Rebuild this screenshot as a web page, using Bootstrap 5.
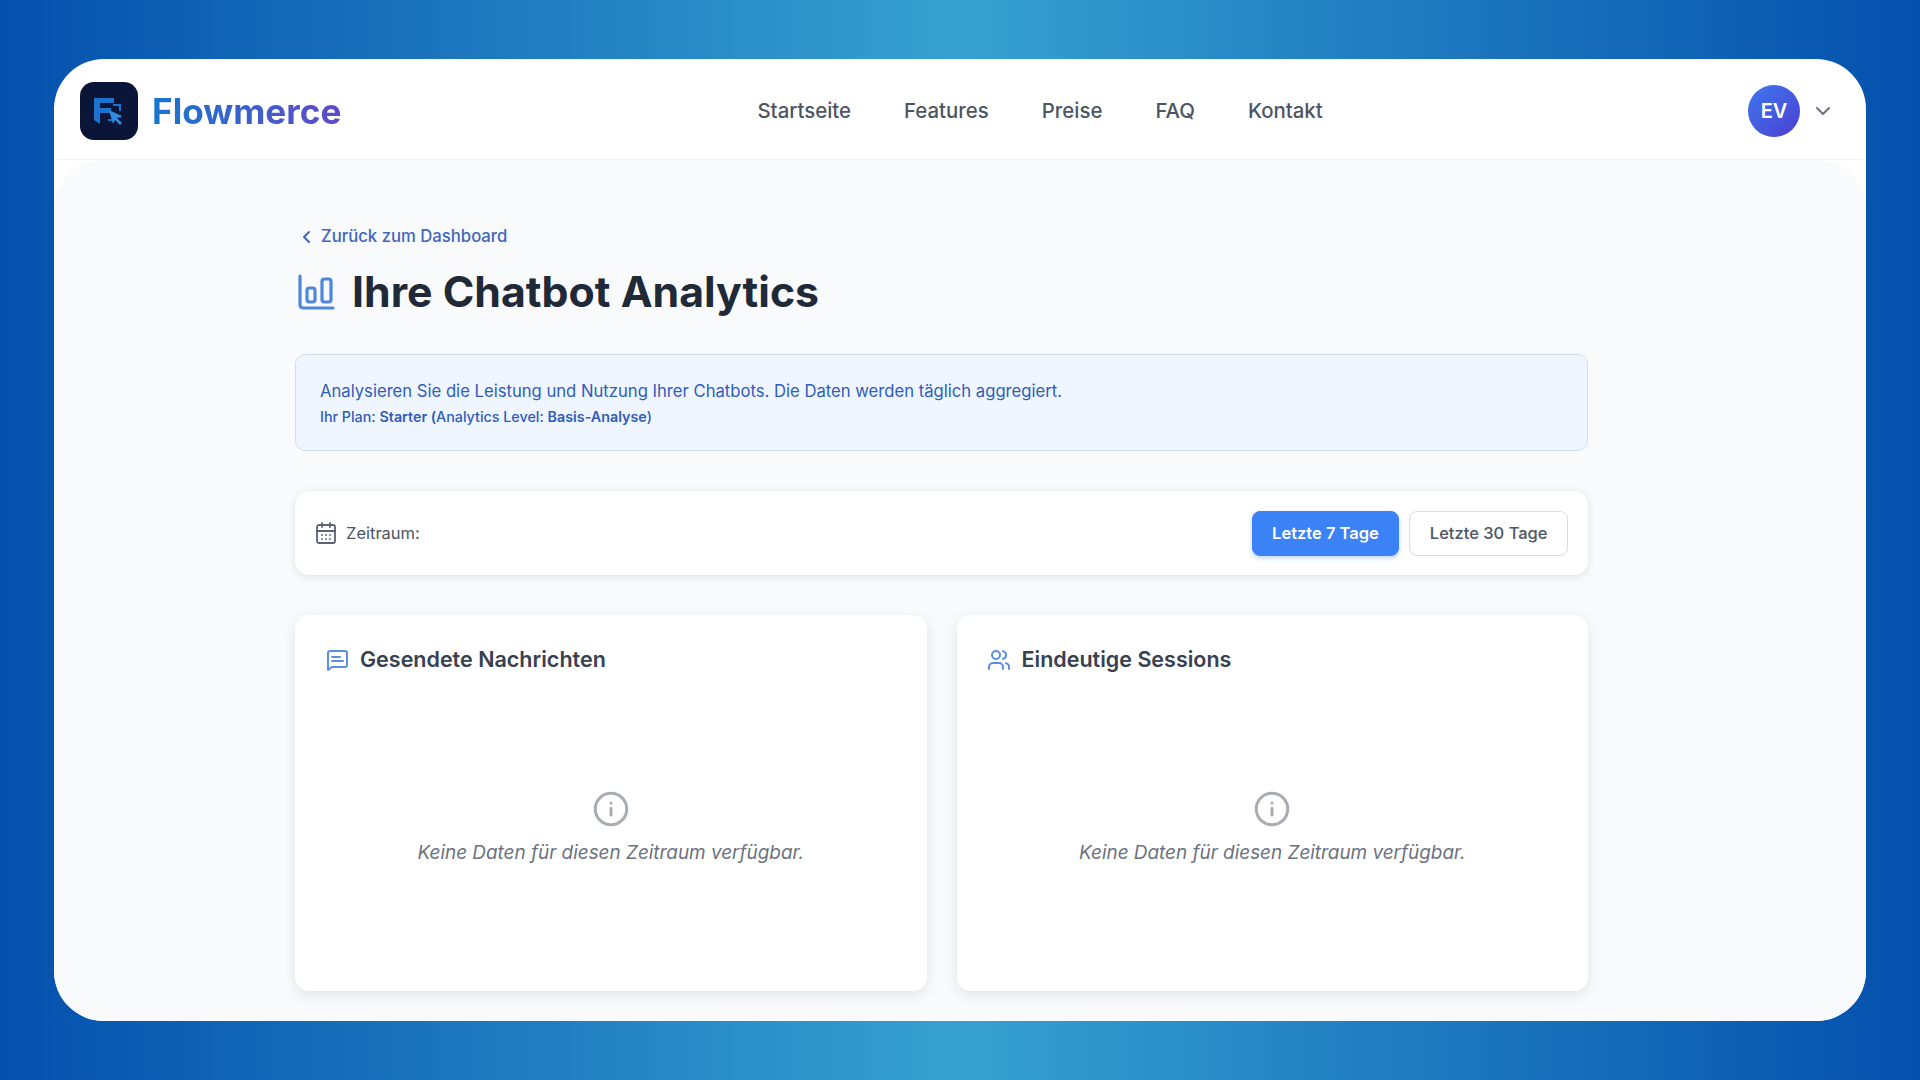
<!DOCTYPE html>
<html lang="de">
<head>
  <meta charset="UTF-8" />
  <meta name="viewport" content="width=device-width, initial-scale=1.0"/>
  <title>Flowmerce Analytics</title>
  <link href="https://cdn.jsdelivr.net/npm/bootstrap@5.3.2/dist/css/bootstrap.min.css" rel="stylesheet" />
  <style>
    html, body { height: 100%; }
    body {
      background: linear-gradient(90deg, #0450ad 0%, #36a1d0 50%, #0450ad 100%);
      font-family: Inter, "Liberation Sans", sans-serif;
      padding: 59px 54px;
      overflow: hidden;
    }
    .app-window { height: 962px; background: #fff; border-radius: 50px; overflow: hidden; }
    .top-bar { height: 101px; padding: 4px 31px 0 26px; border-bottom: 1px solid #f1f3f6; flex: none; }
    .logo-tile { width: 58px; height: 58px; border-radius: 14px; background: #0a1537; }
    .brand-name {
      font-size: 35.2px; font-weight: 700; padding-top: 1px;
      background: linear-gradient(90deg, #1677cf, #6049c9);
      -webkit-background-clip: text; background-clip: text; color: transparent;
    }
    .brand-wrap { gap: 14px; }
    .main-links { gap: 53px; margin-left: 416px; }
    .main-links a { font-size: 20.4px; font-weight: 500; color: #4b5563; text-decoration: none; }
    .avatar-dot {
      width: 52px; height: 52px; border-radius: 50%; color: #fff; font-weight: 600; font-size: 20px;
      background: linear-gradient(135deg, #3f78ef, #4a3fd0);
    }
    .user-wrap { gap: 11px; }
    .page-area { background: #f8fafc; border-radius: 50px 50px 0 0; padding: 64px 278px 0 241px; }
    .back-link { font-size: 16.7px; font-weight: 500; color: #3f66bd; text-decoration: none; gap: 9px; margin-left: 5px; }
    .page-title { font-size: 42.8px; font-weight: 700; color: #1f2937; margin: 0; line-height: 1; }
    .title-row { margin: 17px 0 0 3px; gap: 17px; height: 50px; }
    .info-box {
      margin-top: 36.5px; height: 97px; padding: 23.5px 24px; background: #eff6ff; color: #2f5dbb;
      border: 1px solid #cfdff3; border-radius: 10px; font-size: 16.65px;
    }
    .info-box .plan-line { font-size: 14.3px; font-weight: 500; margin-top: 2px; }
    .info-box strong { font-weight: 600; }
    .range-box {
      margin-top: 40px; height: 84px; padding: 0 20px 0 19px; background: #fff; border-radius: 14px;
      box-shadow: 0 2px 8px rgba(0,0,0,.1);
    }
    .range-label { font-size: 16.5px; color: #4b5563; gap: 8px; }
    .range-btn { height: 45px; padding: 0 19.5px; font-size: 16.5px; font-weight: 500; border-radius: 8px; }
    .range-btn.is-on { background: #3b82f6; color: #fff; border: 1px solid #3b82f6; font-weight: 600; box-shadow: 0 2px 5px rgba(59,130,246,.35); }
    .range-btn.is-off { background: #fff; color: #4b5563; border: 1px solid #d9dde3; }
    .range-btns { gap: 10px; }
    .stat-grid { margin-top: 40px; gap: 30px; }
    .stat-box {
      flex: 1 1 0; height: 376px; padding: 29px 30px; background: #fff; border-radius: 14px;
      box-shadow: 0 4px 14px rgba(0,0,0,.09);
    }
    .stat-head { font-size: 21.5px; font-weight: 600; color: #374151; gap: 11px; margin: 0; height: 32px; }
    .no-data { margin-top: 115px; color: #6b7280; font-style: italic; font-size: 18.9px; gap: 12px; }
  </style>
</head>
<body>
  <div class="app-window d-flex flex-column">
    <header class="top-bar d-flex align-items-center">
      <div class="brand-wrap d-flex align-items-center">
        <div class="logo-tile d-flex align-items-center justify-content-center">
          <svg width="32" height="30" viewBox="0 0 32 30">
            <path d="M1 2h20v5H7v5h11v5H7v11l-6-4z" fill="#1b73cf"/>
            <path d="M20 9h7v6M15 24h4M27 19v3" fill="none" stroke="#1b73cf" stroke-width="2"/>
            <path d="M16 14l13 6-5 2 5 5-2 2-5-5-2 4z" fill="#2f8be0"/>
          </svg>
        </div>
        <span class="brand-name">Flowmerce</span>
      </div>
      <nav class="main-links d-flex">
        <a href="#">Startseite</a>
        <a href="#">Features</a>
        <a href="#">Preise</a>
        <a href="#">FAQ</a>
        <a href="#">Kontakt</a>
      </nav>
      <div class="user-wrap ms-auto d-flex align-items-center">
        <div class="avatar-dot d-flex align-items-center justify-content-center">EV</div>
        <svg width="24" height="24" viewBox="0 0 24 24" fill="none" stroke="#6b7280" stroke-width="2" stroke-linecap="round" stroke-linejoin="round"><path d="m6 9 6 6 6-6"/></svg>
      </div>
    </header>

    <main class="page-area flex-grow-1">
      <a href="#" class="back-link d-inline-flex align-items-center">
        <svg width="12" height="16" viewBox="0 0 12 16" fill="none" stroke="#3f66bd" stroke-width="2" stroke-linecap="round" stroke-linejoin="round"><path d="M9 3 4 8l5 5"/></svg>
        Zurück zum Dashboard
      </a>

      <div class="title-row d-flex align-items-center">
        <svg width="37" height="37" viewBox="0 0 37 37" fill="none" stroke="#4d87dc" stroke-width="3.2" stroke-linecap="round" stroke-linejoin="round">
          <path d="M2 2v29a3 3 0 0 0 3 3h30"/>
          <rect x="9" y="14" width="8" height="14" rx="2.5"/>
          <rect x="24" y="5" width="9" height="23" rx="2.5"/>
        </svg>
        <h1 class="page-title">Ihre Chatbot Analytics</h1>
      </div>

      <div class="info-box">
        <div>Analysieren Sie die Leistung und Nutzung Ihrer Chatbots. Die Daten werden täglich aggregiert.</div>
        <div class="plan-line">Ihr Plan: <strong>Starter (</strong>Analytics Level: <strong>Basis-Analyse</strong>)</div>
      </div>

      <div class="range-box d-flex align-items-center justify-content-between">
        <div class="range-label d-flex align-items-center">
          <svg width="24" height="24" viewBox="0 0 24 24" fill="none" stroke="#5b6472" stroke-width="1.8" stroke-linecap="round" stroke-linejoin="round">
            <rect x="3" y="4" width="18" height="18" rx="2"/>
            <path d="M8 2v4M16 2v4M3 10h18M8 14h.01M12 14h.01M16 14h.01M8 18h.01M12 18h.01M16 18h.01"/>
          </svg>
          <span>Zeitraum:</span>
        </div>
        <div class="range-btns d-flex">
          <button type="button" class="btn range-btn is-on">Letzte 7 Tage</button>
          <button type="button" class="btn range-btn is-off">Letzte 30 Tage</button>
        </div>
      </div>

      <div class="stat-grid d-flex">
        <section class="stat-box">
          <h2 class="stat-head d-flex align-items-center">
            <svg width="24" height="24" viewBox="0 0 24 24" fill="none" stroke="#5a90de" stroke-width="2" stroke-linecap="round" stroke-linejoin="round">
              <path d="M22 17a2 2 0 0 1-2 2H7l-4 3V5a2 2 0 0 1 2-2h15a2 2 0 0 1 2 2z"/>
              <path d="M7 9h8M7 13h11"/>
            </svg>
            Gesendete Nachrichten
          </h2>
          <div class="no-data d-flex flex-column align-items-center">
            <svg width="36" height="36" viewBox="0 0 24 24" fill="none" stroke="#a9adb3" stroke-width="2" stroke-linecap="round" stroke-linejoin="round">
              <circle cx="12" cy="12" r="10.5"/>
              <path d="M12 16v-4.5M12 8h.01"/>
            </svg>
            <span>Keine Daten für diesen Zeitraum verfügbar.</span>
          </div>
        </section>
        <section class="stat-box">
          <h2 class="stat-head d-flex align-items-center">
            <svg width="24" height="24" viewBox="0 0 24 24" fill="none" stroke="#5a90de" stroke-width="2" stroke-linecap="round" stroke-linejoin="round">
              <path d="M16 21v-2a4 4 0 0 0-4-4H6a4 4 0 0 0-4 4v2"/>
              <circle cx="9" cy="7" r="4"/>
              <path d="M22 21v-2a4 4 0 0 0-3-3.87M16 3.13a4 4 0 0 1 0 7.75"/>
            </svg>
            Eindeutige Sessions
          </h2>
          <div class="no-data d-flex flex-column align-items-center">
            <svg width="36" height="36" viewBox="0 0 24 24" fill="none" stroke="#a9adb3" stroke-width="2" stroke-linecap="round" stroke-linejoin="round">
              <circle cx="12" cy="12" r="10.5"/>
              <path d="M12 16v-4.5M12 8h.01"/>
            </svg>
            <span>Keine Daten für diesen Zeitraum verfügbar.</span>
          </div>
        </section>
      </div>
    </main>
  </div>
  <script src="https://cdn.jsdelivr.net/npm/bootstrap@5.3.2/dist/js/bootstrap.bundle.min.js"></script>
</body>
</html>
